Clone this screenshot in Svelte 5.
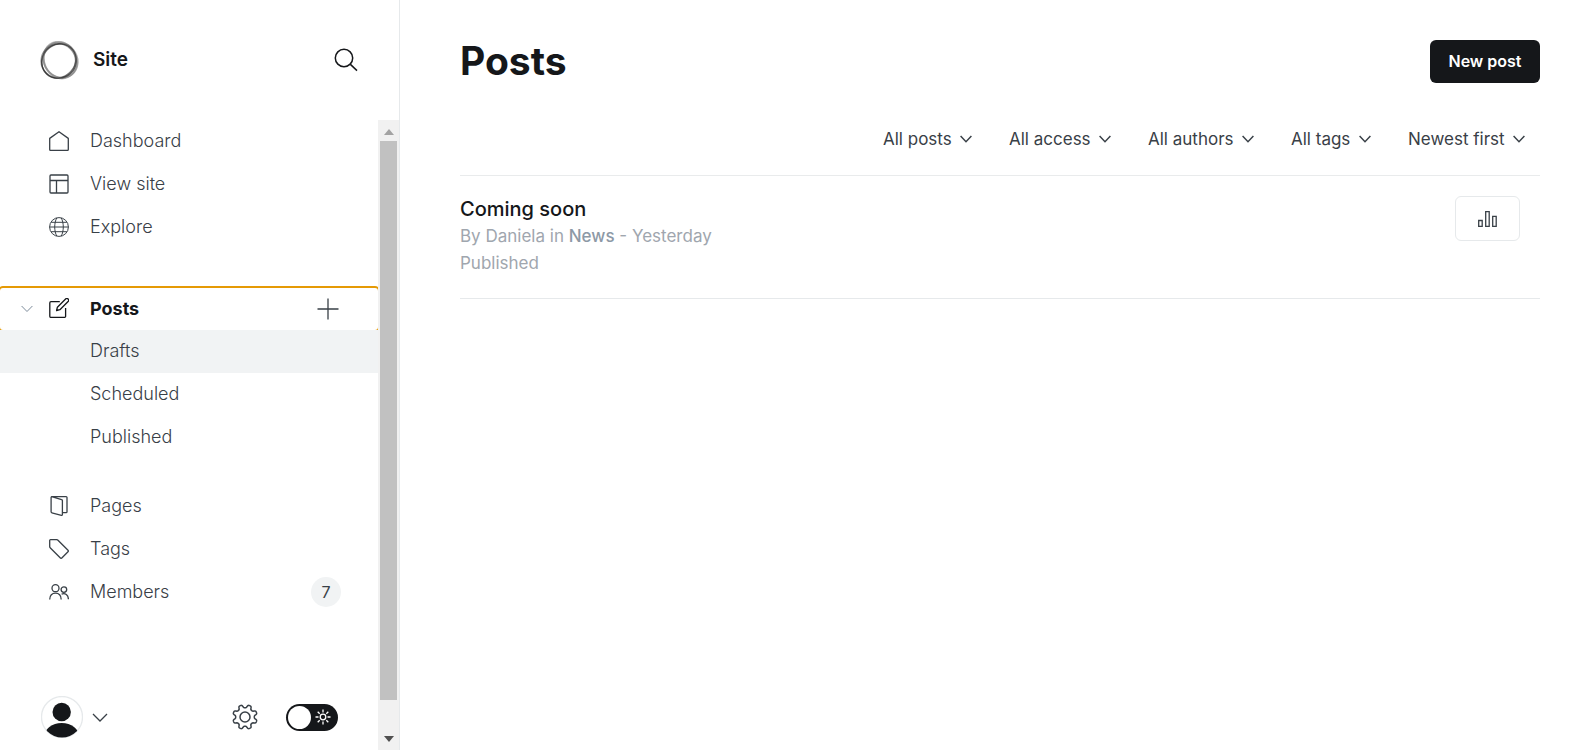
<script>
  const topLinks = [
    { label: 'Dashboard', icon: 'home' },
    { label: 'View site', icon: 'layout' },
    { label: 'Explore', icon: 'globe' }
  ];
  const postLinks = ['Drafts', 'Scheduled', 'Published'];
  const bottomLinks = [
    { label: 'Pages', icon: 'pages' },
    { label: 'Tags', icon: 'tag' },
    { label: 'Members', icon: 'members', count: 7 }
  ];
  const filters = [
    { id: 'type', label: 'All posts' },
    { id: 'access', label: 'All access' },
    { id: 'author', label: 'All authors' },
    { id: 'tag', label: 'All tags' },
    { id: 'order', label: 'Newest first' }
  ];
  let current = $state('Drafts');
  let night = $state(false);

  // Outline of the eight-toothed settings gear, centred on 13,13.
  const gearPoints = Array.from({ length: 160 }, (_, i) => {
    const angle = (i / 160) * Math.PI * 2;
    const radius = 10.8 - 1.5 * Math.tanh(2.2 * Math.cos(8 * angle));
    return `${(13 + radius * Math.cos(angle)).toFixed(2)},${(13 + radius * Math.sin(angle)).toFixed(2)}`;
  }).join(' ');
</script>

{#snippet icon(name)}
  <svg class="icon" viewBox="0 0 20 20" aria-hidden="true">
    {#if name === 'home'}
      <path d="M.7 7.4 10 .7l9.3 6.7v11.2a.8.8 0 0 1-.8.8h-17a.8.8 0 0 1-.8-.8z" />
    {:else if name === 'layout'}
      <rect x="1" y="1" width="18" height="18" rx="1" />
      <path d="M1 6.5h18M7.5 6.5V19" />
    {:else if name === 'globe'}
      <g stroke-width="1">
        <circle cx="10" cy="10" r="9.4" />
        <path d="M.6 10h18.8M2.2 5.3h15.6M2.2 14.7h15.6M7.800.8C5 6 5 14 7.800 19.2M12.200.8c2.800 5.200 2.800 13.200 0 18.400" />
      </g>
    {:else if name === 'edit'}
      <path d="M10.800 3.700H2a1.200 1.200 0 0 0-1.200 1.200V18.200A1.200 1.200 0 0 0 2 19.400h13.400a1.200 1.200 0 0 0 1.200-1.200V10" />
      <path d="m7.600 12.500.8-3.300L16.600 1a1.750 1.750 0 0 1 2.500 2.500L10.900 11.700z" />
    {:else if name === 'pages'}
      <path d="M2.700.7 12.600 3.600a1 1 0 0 1 .8 1v13.900a.8.8 0 0 1-1 .8L2.900 16.800a1 1 0 0 1-.8-1V1.500a.8.8 0 0 1 .8-.8h14.200a.9.9 0 0 1 .9.900v14.200a.9.9 0 0 1-.9.900h-3.500" />
    {:else if name === 'tag'}
      <path d="M1.500.7h6.200a2 2 0 0 1 1.300.6l10 10a1 1 0 0 1 0 1.400l-6.200 6.300a1 1 0 0 1-1.400 0l-10-10A2 2 0 0 1 .7 7.600V1.500a.8.8 0 0 1 .8-.8z" />
    {:else if name === 'members'}
      <circle cx="6.500" cy="6.200" r="3.500" />
      <path d="M.7 17.400c0-4 2.400-6.300 5.800-6.300s5.700 2.400 5.700 6.300" />
      <circle cx="14.900" cy="7.600" r="2.800" />
      <path d="M12.600 12.100c3.600-1.400 6.800.8 6.800 5.100" />
    {/if}
  </svg>
{/snippet}

<div class="app">
  <aside class="sidebar">
    <header class="brand">
      <svg class="logo" viewBox="0 0 38 38" aria-hidden="true">
        <g fill="none">
          <ellipse cx="18" cy="19.500" rx="16.800" ry="16.800" stroke="#333" stroke-width="1.600" stroke-opacity=".55" />
          <ellipse cx="18.400" cy="19.300" rx="17.600" ry="15.600" transform="rotate(-48 18.400 19.300)" stroke="#222" stroke-width="1.300" stroke-opacity=".6" />
          <ellipse cx="20" cy="18.600" rx="17.800" ry="16" transform="rotate(52 20 18.600)" stroke="#555" stroke-width="1.800" stroke-opacity=".5" />
          <ellipse cx="19.600" cy="18.600" rx="18.200" ry="15.600" transform="rotate(66 19.600 18.600)" stroke="#777" stroke-width="2" stroke-opacity=".5" />
          <ellipse cx="18.600" cy="19.600" rx="17.200" ry="16.400" transform="rotate(-30 18.600 19.600)" stroke="#222" stroke-width="1" stroke-opacity=".5" />
        </g>
      </svg>
      <span class="site">Site</span>
      <button class="plain search" aria-label="Search">
        <svg width="24" height="24" viewBox="0 0 24 24"><circle cx="10" cy="10" r="8.700" /><path d="m16.400 16.400 6.600 6.200" /></svg>
      </button>
    </header>

    <div class="scroller">
      <div class="column">
        <nav>
          <ul>
            {#each topLinks as link}
              <li><a class="row" href="#top">{@render icon(link.icon)}<span>{link.label}</span></a></li>
            {/each}
          </ul>
          <div class="row posts">
            <button class="plain fold" aria-label="Toggle post views">
              <svg width="12" height="8" viewBox="0 0 12 8"><path d="m.6 1 5.400 5.500L11.400 1" /></svg>
            </button>
            <a class="posts-link" href="#posts">{@render icon('edit')}<span>Posts</span></a>
            <button class="plain add" aria-label="New post">
              <svg width="22" height="22" viewBox="0 0 22 22"><path d="M11 .5v21M.5 11h21" /></svg>
            </button>
          </div>
          <ul>
            {#each postLinks as label}
              <li>
                <a class="row sub" class:current={current === label} href="#posts" onclick={() => (current = label)}><span>{label}</span></a>
              </li>
            {/each}
          </ul>
          <ul class="last">
            {#each bottomLinks as link}
              <li>
                <a class="row" href="#content">
                  {@render icon(link.icon)}<span>{link.label}</span>
                  {#if link.count}<span class="badge">{link.count}</span>{/if}
                </a>
              </li>
            {/each}
          </ul>
        </nav>

        <footer>
          <button class="plain account" aria-label="Account menu">
            <svg class="avatar" width="42" height="42" viewBox="0 0 42 42">
              <defs><clipPath id="face"><circle cx="21" cy="21" r="20.500" /></clipPath></defs>
              <circle cx="21" cy="21" r="20.500" fill="#fff" stroke="#e6e9eb" />
              <g clip-path="url(#face)" fill="#15171a">
                <circle cx="20.700" cy="16" r="9.200" />
                <ellipse cx="20.700" cy="41" rx="17.500" ry="14" />
              </g>
            </svg>
            <svg class="caret" width="16" height="10" viewBox="0 0 16 10"><path d="m1 2 7 7 7-7" /></svg>
          </button>
          <button class="plain gear" aria-label="Settings">
            <svg width="26" height="26" viewBox="0 0 26 26">
              <circle cx="13" cy="13" r="5" />
              <polygon points={gearPoints} stroke-linejoin="round" />
            </svg>
          </button>
          <label class="switch">
            <input type="checkbox" role="switch" aria-label="Night mode" bind:checked={night} />
            <span class="knob"></span>
            <svg width="16" height="16" viewBox="0 0 16 16" aria-hidden="true">
              <circle cx="8" cy="8" r="2.800" />
              <path d="M8 .5v3M8 12.500v3M.5 8h3M12.500 8h3M2.700 2.700l2 2M11.300 11.300l2 2M2.700 13.300l2-2M11.300 4.700l2-2" />
            </svg>
          </label>
        </footer>
      </div>

      <div class="scrollbar" aria-hidden="true">
        <svg width="10" height="6" viewBox="0 0 10 6" fill="#a3a3a3"><path d="M0 6 5 0l5 6z" /></svg>
        <div class="thumb"></div>
        <svg width="10" height="6" viewBox="0 0 10 6" fill="#505050"><path d="M0 0h10L5 6z" /></svg>
      </div>
    </div>
  </aside>

  <main>
    <div class="heading">
      <h1>Posts</h1>
      <button class="new">New post</button>
    </div>
    <div class="filters">
      {#each filters as filter}
        <div class="filter">
          <select id={filter.id} aria-label={filter.label}><option>{filter.label}</option></select>
          <svg width="12" height="8" viewBox="0 0 12 8" aria-hidden="true"><path d="m.6 1 5.400 5.700L11.400 1" /></svg>
        </div>
      {/each}
    </div>
    <article>
      <div class="summary">
        <h2>Coming soon</h2>
        <p>By Daniela in <strong>News</strong> - Yesterday</p>
        <p>Published</p>
      </div>
      <button class="stats" aria-label="Post analytics">
        <svg width="20" height="16" viewBox="0 0 20 16"><path d="M.7 9.500h3.500v5.800H.7zM7.700.7h3.500v14.600H7.700zM14.700 5.300h3.500v10h-3.500z" /></svg>
      </button>
    </article>
  </main>
</div>

<style>
  :global(body) {
    margin: 0;
    background: #fff;
  }
  .app {
    display: flex;
    min-height: 100vh;
    font-family: Inter, 'Liberation Sans', sans-serif;
    color: #15171a;
  }
  .app :is(button, select) {
    font-family: inherit;
    cursor: pointer;
  }
  .app svg {
    display: block;
    flex: none;
  }
  .sidebar {
    box-sizing: border-box;
    flex: 0 0 400px;
    display: flex;
    flex-direction: column;
    border-right: 1px solid #e6e9eb;
  }
  .brand {
    box-sizing: border-box;
    height: 120px;
    display: flex;
    align-items: center;
    gap: 14px;
    padding: 0 41px 0 40px;
  }
  .logo {
    width: 39px;
    height: 39px;
  }
  .site {
    flex: 1;
    padding-bottom: 2px;
    font-size: 19px;
    font-weight: 600;
  }
  .plain {
    display: flex;
    align-items: center;
    padding: 0;
    border: 0;
    background: none;
    fill: none;
    stroke: #394047;
    stroke-width: 1.3;
  }
  .search {
    stroke: #15171a;
    stroke-width: 1.5;
  }
  .scroller {
    flex: 1;
    display: flex;
  }
  .column {
    flex: 1;
    display: flex;
    flex-direction: column;
    justify-content: space-between;
    overflow: hidden;
  }
  ul {
    list-style: none;
    margin: 0;
    padding: 0;
  }
  .row {
    box-sizing: border-box;
    height: 43px;
    display: flex;
    align-items: center;
    gap: 21px;
    padding: 0 37px 2px 49px;
    color: #394047;
    font-size: 18px;
    font-weight: 300;
    text-decoration: none;
  }
  .icon {
    width: 20px;
    height: 20px;
    fill: none;
    stroke: #394047;
    stroke-width: 1.3;
    stroke-linejoin: round;
  }
  .posts {
    height: 42px;
    margin-top: 39px;
    padding: 0 39px 0 21px;
    gap: 16px;
    border-radius: 3px;
    outline: 2px solid #e59a05;
  }
  .fold {
    stroke: #7c8b9a;
    stroke-width: 1;
  }
  .posts-link {
    flex: 1;
    display: flex;
    align-items: center;
    gap: 21px;
    padding-bottom: 2px;
    color: #15171a;
    font-weight: 700;
    text-decoration: none;
  }
  .posts-link .icon {
    stroke: #15171a;
  }
  .sub {
    position: relative;
    z-index: 1;
    padding-left: 90px;
  }
  .current {
    background: #f1f3f4;
  }
  .last {
    margin-top: 26px;
  }
  .badge {
    width: 30px;
    margin-left: auto;
    border-radius: 15px;
    background: #f1f3f4;
    font-size: 16px;
    font-weight: 400;
    line-height: 30px;
    text-align: center;
  }
  footer {
    display: flex;
    align-items: center;
    padding: 0 40px 12px 41px;
  }
  .account {
    flex: 1;
    gap: 9px;
  }
  .avatar {
    stroke: none;
  }
  .gear {
    stroke-width: 1.5;
    margin-right: 28px;
  }
  .switch {
    box-sizing: border-box;
    width: 52px;
    height: 27px;
    display: flex;
    align-items: center;
    justify-content: space-between;
    padding: 0 7px 0 2px;
    border-radius: 14px;
    background: #15171a;
    fill: none;
    stroke: #fff;
    stroke-width: 1.3;
    cursor: pointer;
  }
  .switch input {
    position: absolute;
    opacity: 0;
  }
  .knob {
    width: 23px;
    height: 23px;
    border-radius: 50%;
    background: #fff;
  }
  .scrollbar {
    box-sizing: border-box;
    width: 21px;
    display: flex;
    flex-direction: column;
    align-items: center;
    justify-content: space-between;
    gap: 6px;
    padding: 9px 2px 8px;
    background: #f1f1f1;
  }
  .thumb {
    width: 17px;
    flex: 1;
    margin-bottom: 30px;
    background: #c1c1c1;
  }
  main {
    flex: 1;
    padding: 40px 43px 0 60px;
  }
  .heading {
    display: flex;
    justify-content: space-between;
    align-items: flex-start;
    height: 43px;
  }
  h1 {
    margin: 0;
    font-size: 39px;
    font-weight: 700;
    line-height: 41px;
  }
  .new {
    min-width: 110px;
    height: 43px;
    padding: 0 16px 2px;
    border: 0;
    border-radius: 6px;
    background: #15171a;
    color: #fff;
    font-size: 16px;
    font-weight: 600;
  }
  .filters {
    display: flex;
    flex-wrap: wrap;
    justify-content: flex-end;
    gap: 6px;
    padding: 35px 0 16px;
    border-bottom: 1px solid #e9ebec;
  }
  .filter {
    display: grid;
    align-items: center;
    height: 41px;
  }
  .filter select,
  .filter svg {
    grid-area: 1 / 1;
  }
  .filter select {
    appearance: none;
    padding: 0 35px 0 16px;
    border: 0;
    background: none;
    color: #394047;
    font-size: 17px;
    line-height: 24px;
  }
  .filter svg {
    justify-self: end;
    margin-right: 15px;
    fill: none;
    stroke: #394047;
    stroke-width: 1.5;
    pointer-events: none;
  }
  article {
    display: flex;
    justify-content: space-between;
    align-items: flex-start;
    padding: 20px 20px 21px 0;
    border-bottom: 1px solid #e6e9eb;
  }
  h2,
  p {
    margin: 0;
    line-height: 27px;
  }
  h2 {
    font-size: 20px;
    font-weight: 500;
  }
  p {
    color: #a0a6ae;
    font-size: 17px;
  }
  strong {
    color: #8d99a6;
    font-weight: 500;
  }
  .stats {
    width: 65px;
    height: 45px;
    display: flex;
    align-items: center;
    justify-content: center;
    padding: 0;
    border: 1px solid #e6e9eb;
    border-radius: 6px;
    background: #fff;
    fill: none;
    stroke: #394047;
    stroke-width: 1.3;
  }
</style>
